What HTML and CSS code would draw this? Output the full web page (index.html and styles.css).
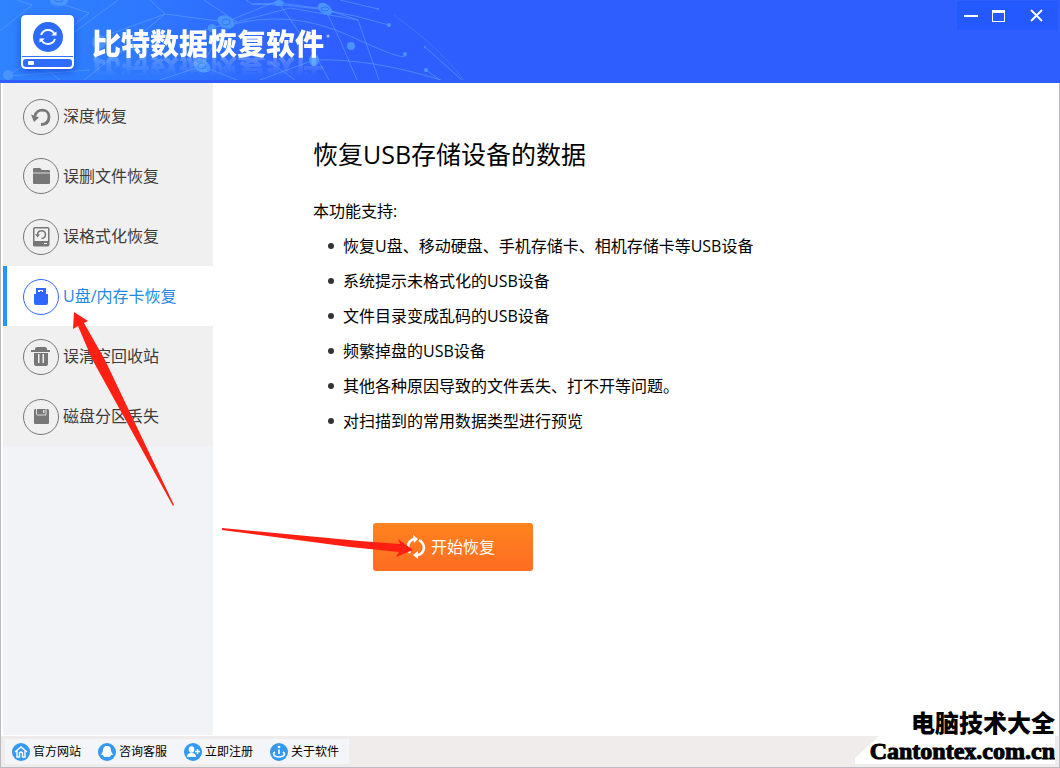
FILE: index.html
```html
<!DOCTYPE html>
<html lang="zh-CN">
<head>
<meta charset="utf-8">
<meta name="viewport" content="width=device-width, initial-scale=1">
<title>比特数据恢复软件</title>
<link rel="stylesheet" href="styles.css">
</head>
<body>
<div class="window">
  <header class="header">
    <svg class="header-art" width="480" height="80" viewBox="0 0 480 80" fill="none" aria-hidden="true">
      <g stroke="#62a0ff" stroke-opacity=".6">
        <path d="M17 0L32 5L0 31M50 0L89 13L32 59L8 76M118 0L76 31L32 59M150 0L165 14L118 53L84 80M8 76L90 70M102 37L165 14L226 22L280 0M204 0L237 22L290 8L358 20M237 22L212 28L118 53M202 66L226 22M202 66L160 80M202 66L237 80M60 80L32 59M226 26Q290 8 350 36T405 54M246 0L252 4L279 3L318 60L329 80M279 3L325 9L340 40L357 80M252 4Q320 4 389 25M314 60L260 80M314 60Q370 58 441 80M325 9L358 20L379 80M270 62L295 80M340 0L378 9M425 47L462 80"/>
        <path d="M394 15Q440 48 464 80" stroke-opacity=".3"/>
        <path d="M426 70L440 80"/>
      </g>
      <g fill="#4a94ff">
        <ellipse cx="59" cy="1" rx="9" ry="5"/><circle cx="8" cy="75" r="5"/><circle cx="99" cy="42" r="7"/>
        <ellipse cx="226" cy="22" rx="9" ry="6" transform="rotate(25 226 22)"/>
        <ellipse cx="202" cy="66" rx="9" ry="6" transform="rotate(25 202 66)"/>
        <circle cx="212" cy="28" r="4"/><ellipse cx="279" cy="3" rx="5" ry="3"/>
        <ellipse cx="325" cy="9" rx="8" ry="5" transform="rotate(35 325 9)"/>
        <ellipse cx="314" cy="60" rx="5" ry="6"/><ellipse cx="351" cy="46" rx="4" ry="4"/>
        <circle cx="389" cy="25" r="2"/><circle cx="405" cy="54" r="2"/><circle cx="378" cy="9" r="1"/><circle cx="425" cy="47" r="1"/><circle cx="426" cy="70" r="2"/>
      </g>
      <g stroke="#2f76fa"><ellipse cx="59" cy="0" rx="4" ry="2"/><ellipse cx="226" cy="22" rx="4" ry="3"/><ellipse cx="202" cy="66" rx="4" ry="3"/><ellipse cx="325" cy="9" rx="4" ry="2"/></g>
      <circle cx="328" cy="36" r="1.5" fill="#9fc2ff"/>
    </svg>
    <svg class="logo" width="54" height="56" viewBox="0 0 54 56" aria-hidden="true">
      <path d="M5 1H48Q53 1 53 6V50Q53 55 48 55H5Q0 55 0 50V6Q0 1 5 1Z" fill="#fff"/>
      <path d="M1 42.500H52" stroke="#2f76fa" stroke-width="1"/>
      <rect x="2" y="45" width="49" height="8" rx="3" fill="#2e6dff"/>
      <rect x="7" y="47" width="6" height="4" rx="1" fill="#fff"/>
      <circle cx="27" cy="23" r="15" fill="#2b6cff"/>
      <g fill="none" stroke="#fff" stroke-width="2"><path d="M20 21Q22 16 27 16Q32 16 34 21M34 25Q32 30 27 30Q22 30 20 25"/></g>
      <path d="M30 21.500H35.500V17.500ZM24 24.500H18.500V28.500Z" fill="#fff"/>
    </svg>
    <h1 class="brand">比特数据恢复软件</h1>
    <div class="window-buttons">
      <button type="button" aria-label="最小化"><svg width="14" height="14" viewBox="0 0 14 14"><path d="M0 6H14V8H0Z" fill="#fff"/></svg></button>
      <button type="button" aria-label="最大化"><svg width="14" height="14" viewBox="0 0 14 14"><path d="M0 1H13V13H0ZM1 4V12H12V4Z" fill="#fff" fill-rule="evenodd"/></svg></button>
      <button type="button" class="close" aria-label="关闭"><svg width="14" height="14" viewBox="0 0 14 14"><path d="M1 1L12 12M12 1L1 12" stroke="#fff" stroke-width="1.8"/></svg></button>
    </div>
  </header>

  <div class="main">
    <nav class="sidebar">
      <a class="item" href="#deep"><svg width="36" height="38" viewBox="0 -2 36 38" aria-hidden="true"><circle class="ring" cx="18" cy="18" r="17.5"/><path d="M12 17C13 9 26 9 26 17.500Q26 25.500 18 25.500" fill="none" stroke="#777" stroke-width="2.8"/><path d="M8 15.500L16 18.500L11 23Z" fill="#777"/></svg><span>深度恢复</span></a>
      <a class="item" href="#deleted"><svg width="36" height="38" viewBox="0 -1 36 38" aria-hidden="true"><circle class="ring" cx="18" cy="18" r="17.5"/><path d="M10 11Q10 10 11 10H17L19 12H26Q27 12 27 13V14H10Z" fill="#777"/><path d="M10 14H27V16H10Z" fill="#aaa"/><path d="M10 16H27V25Q27 26 26 26H11Q10 26 10 25Z" fill="#777"/></svg><span>误删文件恢复</span></a>
      <a class="item" href="#format"><svg width="36" height="38" viewBox="0 -2 36 38" aria-hidden="true"><circle class="ring" cx="18" cy="18" r="17.5"/><rect x="10.750" y="8.750" width="15" height="18" rx="1" fill="none" stroke="#777" stroke-width="1.500"/><path d="M10 22H26V27H10Z" fill="#777"/><path d="M21 24H24V25H21Z" fill="#fff"/><path d="M14.500 16C14.500 10.500 22.500 10.500 22.500 15.500Q22.500 19 18.500 19.500" fill="none" stroke="#777" stroke-width="1.500"/><path d="M12 15L17 15.500L14.500 18.500Z" fill="#777"/></svg><span>误格式化恢复</span></a>
      <a class="item active" href="#usb" aria-current="page"><svg width="36" height="38" viewBox="0 -2 36 38" aria-hidden="true"><circle class="ring" cx="18" cy="18" r="17.500"/><path d="M13 9H23V13H20V11H15V13H13Z" fill="#2f66ff"/><path d="M17 12H19V13H23V15H25V24Q25 26 23 26H13Q11 26 11 24V15H13V13H17Z" fill="#2f66ff"/></svg><span>U盘/内存卡恢复</span></a>
      <a class="item" href="#recycle"><svg width="36" height="38" viewBox="0 -2 36 38" aria-hidden="true"><circle class="ring" cx="18" cy="18" r="17.500"/><path d="M12 10Q12 8 14 8H22Q24 8 24 10V11H27V13H8V11H12ZM11 14H25V25Q25 27 23 27H13Q11 27 11 25ZM15 15V24H16.500V15ZM19.500 15V24H21V15Z" fill="#777" fill-rule="evenodd"/></svg><span>误清空回收站</span></a>
      <a class="item" href="#partition"><svg width="36" height="38" viewBox="0 -2 36 38" aria-hidden="true"><circle class="ring" cx="18" cy="18" r="17.500"/><path d="M12 10H25L26 11V24Q26 25 25 25H12Q11 25 11 24V11Z" fill="#777"/><path d="M13.500 10V15Q13.500 16 14.500 16H23V10" fill="none" stroke="#ddd" stroke-width="1"/><path d="M20 11H21.500V14H20Z" fill="#ddd"/></svg><span>磁盘分区丢失</span></a>
    </nav>
    <main class="content">
      <h2>恢复USB存储设备的数据</h2>
      <p>本功能支持:</p>
      <ul>
        <li>恢复U盘、移动硬盘、手机存储卡、相机存储卡等USB设备</li>
        <li>系统提示未格式化的USB设备</li>
        <li>文件目录变成乱码的USB设备</li>
        <li>频繁掉盘的USB设备</li>
        <li>其他各种原因导致的文件丢失、打不开等问题。</li>
        <li>对扫描到的常用数据类型进行预览</li>
      </ul>
      <button type="button" class="start"><svg width="22" height="24" viewBox="0 0 22 24" aria-hidden="true"><path d="M9 4Q3 6 3 12Q3 15 5 18M14 5Q19 8 19 13Q18 19 13 20" fill="none" stroke="#fff" stroke-width="2.600"/><path d="M8 0L13 4L9 8ZM13 16L8 20L13 24Z" fill="#fff"/></svg>开始恢复</button>
    </main>
  </div>

  <footer class="footer">
    <nav class="links">
      <a href="#site"><svg width="18" height="18" viewBox="0 0 18 18" aria-hidden="true"><circle cx="9" cy="9" r="9" fill="#3399f3"/><path d="M3 9L9 4L15 9M5 8V14H7.500V10Q9 8 10.500 10V14H13V8" fill="none" stroke="#fff" stroke-width="1.400"/></svg>官方网站</a>
      <a href="#service"><svg width="18" height="18" viewBox="0 0 18 18" aria-hidden="true"><circle cx="9" cy="9" r="9" fill="#3399f3"/><path d="M9 3C12 3 13 5 13 8L15 12L13 12L12 14H6L5 12L3 12L5 8C5 5 6 3 9 3Z" fill="#fff"/></svg>咨询客服</a>
      <a href="#register"><svg width="18" height="18" viewBox="0 0 18 18" aria-hidden="true"><circle cx="9" cy="9" r="9" fill="#3399f3"/><ellipse cx="7.500" cy="6.500" rx="2.800" ry="3.300" fill="#fff"/><path d="M3 14Q3 10 7.500 10Q12 10 12 14Z" fill="#fff"/><path d="M11 8.500H16M13.500 6V11" fill="none" stroke="#fff" stroke-width="1.500"/></svg>立即注册</a>
      <a href="#about"><svg width="18" height="18" viewBox="0 0 18 18" aria-hidden="true"><circle cx="9" cy="9" r="9" fill="#3399f3"/><circle cx="9" cy="4" r="1.300" fill="#fff"/><path d="M9 6.500V11M5 9Q2 11 5 13Q9 15 13 13Q16 11 13 9" fill="none" stroke="#fff" stroke-width="1.600"/></svg>关于软件</a>
    </nav>
  </footer>

  <div class="watermark">
    <strong class="mark-name">电脑技术大全</strong>
    <strong class="mark-site">Cantontex.com.cn</strong>
  </div>
  <svg class="arrows" width="420" height="560" viewBox="0 0 420 560" fill="#ff2013" aria-hidden="true">
    <path d="M74 312L88 321L84 323L105 360L174 505L173 506L92 359L78 326L73 329Z"/>
    <path d="M222 528L360 541L400 544L398 539L413 550L396 557L399 552L350 547L222 530Z"/>
  </svg>
</div>
</body>
</html>
```
FILE: styles.css
```css
* { box-sizing: border-box; }
body {
  margin: 0;
  font: 16px/24px "Open Sans", "Noto Sans CJK SC", sans-serif;
  color: #000;
}
button { font: inherit; border: 0; padding: 0; color: #fff; cursor: pointer; }
a { text-decoration: none; color: inherit; }
svg { display: block; flex: none; }

.window {
  position: relative;
  display: flex;
  flex-direction: column;
  min-height: 100vh;
  background: #fff;
}

.header {
  position: relative;
  display: flex;
  align-items: flex-start;
  height: 83px;
  padding: 14px 2px 0 21px;
  background: linear-gradient(90deg, #2f83ff 0, #2e78ff 140px, #2f5eff 340px);
  border-bottom: 3px solid #2f5cfa;
}
.header-art { position: absolute; left: 0; top: 0; }
.logo { position: relative; filter: drop-shadow(0 3px 4px #1c55dd); }
.brand {
  position: relative;
  margin: 14px 0 0 17px;
  font-size: 29px;
  line-height: 32px;
  font-weight: 900;
  color: #fff;
  white-space: nowrap;
  -webkit-box-reflect: below -6px linear-gradient(transparent 30%, rgba(255, 255, 255, .25));
}
.window-buttons {
  position: relative;
  display: flex;
  align-items: center;
  gap: 14px;
  height: 29px;
  margin: -13px 0 0 auto;
  padding: 0 14px 0 7px;
  background: #2459ff;
}
.window-buttons button { background: none; }
.window-buttons .close { margin-left: 10px; }

.main {
  flex: 1;
  display: flex;
  border: solid #babac0;
  border-width: 0 1px;
}
.sidebar {
  flex: none;
  width: 212px;
  margin-bottom: 1px;
  padding-top: 3px;
  border-left: 2px solid #fff;
  background: linear-gradient(#f0f0f0 363px, #f1f3f6 363px);
}
.item {
  display: flex;
  align-items: center;
  gap: 4px;
  height: 60px;
  padding-left: 20px;
  color: #3c3c3c;
}
.ring { fill: none; stroke: #777; }
.active {
  padding-left: 16px;
  border-left: 4px solid #2196ff;
  background: #fff;
  color: #1e88e5;
}
.active .ring { stroke: #2f66ff; }

.content { flex: 1; padding: 53px 24px 40px 100px; }
.content h2 { margin: 0; font-size: 25px; line-height: 36px; font-weight: 400; }
.content p { margin: 27px 0 6px; }
.content ul { margin: 0; padding: 0; list-style: none; }
.content li {
  display: flex;
  align-items: center;
  gap: 9px;
  padding-left: 15px;
  line-height: 35px;
}
.content li::before {
  content: "";
  flex: none;
  width: 6px;
  height: 6px;
  margin-bottom: 2px;
  border-radius: 50%;
  background: #333;
}
.start {
  display: flex;
  align-items: center;
  justify-content: center;
  gap: 4px;
  width: 160px;
  height: 48px;
  margin: 84px 0 0 60px;
  padding-right: 6px;
  border-radius: 3px;
  background: linear-gradient(#ff831e, #ff6c22);
}

.footer {
  height: 32px;
  padding: 3px 4px;
  border: solid #babac0;
  border-width: 0 1px 1px;
  background: #f0ecec;
}
.links {
  display: flex;
  align-items: center;
  gap: 17px;
  width: fit-content;
  height: 25px;
  padding: 0 10px 0 7px;
  background: #f3f5f8;
  font-size: 12px;
  line-height: 24px;
}
.links a { display: flex; align-items: center; gap: 3px; }

.watermark {
  position: absolute;
  right: 5px;
  bottom: 4px;
  display: flex;
  flex-direction: column;
  align-items: flex-end;
  padding-left: 15px;
  background: #fff;
  clip-path: polygon(24px 0, 100% 0, 100% 100%, 0 100%, 0 90%, 24px 50%);
  white-space: nowrap;
}
.mark-name { font-size: 24px; line-height: 30px; font-weight: 900; }
.mark-site { font-family: "Liberation Serif", serif; font-size: 24px; line-height: 26px; -webkit-text-stroke: 1px #000; }
.arrows { position: absolute; left: 0; top: 0; pointer-events: none; }
```
